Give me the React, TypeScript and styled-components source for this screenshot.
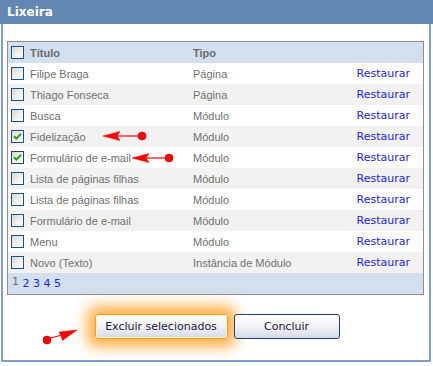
import React from "react";
import styled, { createGlobalStyle } from "styled-components";

const GlobalStyle = createGlobalStyle`
  html, body {
    margin: 0;
    padding: 0;
    background: #ffffff;
  }
`;

type Item = {
  title: string;
  tipo: string;
  checked?: boolean;
  focus?: boolean;
};

const items: Item[] = [
  { title: "Filipe Braga", tipo: "Página" },
  { title: "Thiago Fonseca", tipo: "Página" },
  { title: "Busca", tipo: "Módulo" },
  { title: "Fidelização", tipo: "Módulo", checked: true },
  { title: "Formulário de e-mail", tipo: "Módulo", checked: true, focus: true },
  { title: "Lista de páginas filhas", tipo: "Módulo" },
  { title: "Lista de páginas filhas", tipo: "Módulo" },
  { title: "Formulário de e-mail", tipo: "Módulo" },
  { title: "Menu", tipo: "Módulo" },
  { title: "Novo (Texto)", tipo: "Instância de Módulo" },
];

const CheckMark = () => (
  <svg width="9" height="9" viewBox="0 0 9 9">
    <path d="M1 4.2 L3.4 6.6 L8 1.8" fill="none" stroke="#21a121" strokeWidth="2" />
  </svg>
);

const Box = ({ checked, focus }: { checked?: boolean; focus?: boolean }) => (
  <CheckOuter $focus={focus}>
    <CheckBox>{checked && <CheckMark />}</CheckBox>
  </CheckOuter>
);

const App = (): JSX.Element => {
  return (
    <>
      <GlobalStyle />
      <Panel>
        <Header>Lixeira</Header>
        <Body>
          <Table>
            <HeadRow>
              <Cell>
                <Box />
              </Cell>
              <HeadText>Título</HeadText>
              <HeadText>Tipo</HeadText>
              <span />
            </HeadRow>
            {items.map((it, i) => (
              <Row key={i} $alt={i % 2 === 1}>
                <Cell>
                  <Box checked={it.checked} focus={it.focus} />
                </Cell>
                <Text>{it.title}</Text>
                <Text>{it.tipo}</Text>
                <Restore href="#">Restaurar</Restore>
              </Row>
            ))}
            <Pager>
              <Current>1</Current>
              <PageLink href="#">2</PageLink>
              <PageLink href="#">3</PageLink>
              <PageLink href="#">4</PageLink>
              <PageLink href="#">5</PageLink>
            </Pager>
          </Table>
          <Buttons>
            <Button $glow>Excluir selecionados</Button>
            <Button $w={106}>Concluir</Button>
          </Buttons>
        </Body>
        <Notes width="433" height="366" viewBox="0 0 433 366">
          <g fill="#ff0000" stroke="#ff0000">
            <line x1="116" y1="136" x2="141" y2="136" strokeWidth="1.2" />
            <polygon points="103,136 120,131.5 117,136 120,140.5" strokeWidth="0.5" />
            <circle cx="142" cy="136" r="4" stroke="#c00000" strokeWidth="0.6" />

            <line x1="145" y1="158" x2="168" y2="158" strokeWidth="1.2" />
            <polygon points="132,158 149,153.5 146,158 149,162.5" strokeWidth="0.5" />
            <circle cx="169" cy="158" r="4" stroke="#c00000" strokeWidth="0.6" />

            <line x1="47" y1="339" x2="62" y2="335" strokeWidth="1.2" />
            <polygon points="77,330 62.5,340.5 61,336 59,332" strokeWidth="0.5" />
            <circle cx="47" cy="340" r="4" stroke="#c00000" strokeWidth="0.6" />
          </g>
        </Notes>
      </Panel>
    </>
  );
};

export default App;

const Panel = styled.div`
  position: relative;
  width: 433px;
  height: 366px;
  background: #ffffff;
  font-family: "Liberation Sans", Arial, sans-serif;
`;

const Header = styled.div`
  height: 24px;
  line-height: 25px;
  padding-left: 7px;
  background: #6386b3;
  color: #ffffff;
  font-family: "DejaVu Sans", Verdana, sans-serif;
  font-weight: bold;
  font-size: 12px;
`;

const Body = styled.div`
  margin: 0 2px 0 1px;
  height: 319px;
  padding: 17px 5px 0 4px;
  border: 2px solid #7f9dc6;
  border-top: none;
  display: flex;
  flex-direction: column;
  gap: 19px;
`;

const Table = styled.div`
  border: 1px solid #8e8e8e;
  display: flex;
  flex-direction: column;
`;

const RowBase = styled.div`
  display: grid;
  grid-template-columns: 22px 163px 161px 1fr;
  align-items: center;
  height: 21px;
`;

const HeadRow = styled(RowBase)`
  background: #d2dfef;
`;

const Row = styled(RowBase)<{ $alt?: boolean }>`
  background: ${(p) => (p.$alt ? "#f2f2f2" : "#ffffff")};
`;

const Cell = styled.div`
  display: flex;
  align-items: center;
  padding-left: 3px;
`;

const CheckOuter = styled.div<{ $focus?: boolean }>`
  width: 13px;
  height: 13px;
  outline: ${(p) => (p.$focus ? "1px dotted #333" : "none")};
  outline-offset: -1px;
  display: flex;
`;

const CheckBox = styled.div`
  width: 11px;
  height: 11px;
  border: 1px solid #1c5180;
  background: linear-gradient(135deg, #d8d8d2 0%, #f2f2ef 60%, #ffffff 100%);
  display: flex;
  align-items: center;
  justify-content: center;
`;

const HeadText = styled.span`
  font-size: 11px;
  font-weight: bold;
  color: #6b6b6b;
`;

const Text = styled.span`
  font-size: 11px;
  color: #707070;
  white-space: nowrap;
`;

const Restore = styled.a`
  justify-self: end;
  margin-right: 13px;
  font-family: "DejaVu Sans", Verdana, sans-serif;
  font-size: 11px;
  color: #2323e6;
  text-decoration: none;
`;

const Pager = styled.div`
  height: 21px;
  background: #d2dfef;
  display: flex;
  align-items: center;
  gap: 3.5px;
  padding-left: 4px;
  font-family: "DejaVu Sans", Verdana, sans-serif;
  font-size: 11px;
`;

const Current = styled.span`
  color: #707070;
  position: relative;
  top: -2px;
`;

const PageLink = styled.a`
  color: #2323e6;
  text-decoration: none;
`;

const Buttons = styled.div`
  display: flex;
  justify-content: center;
  gap: 6px;
  padding-left: 3px;
`;

const Button = styled.button<{ $glow?: boolean; $w?: number }>`
  width: ${(p) => (p.$w ? `${p.$w}px` : "133px")};
  height: 25px;
  padding: 0;
  font-family: "DejaVu Sans", Verdana, sans-serif;
  font-size: 11px;
  color: #24163a;
  border-radius: 3px;
  border: 1px solid ${(p) => (p.$glow ? "#e9a21c" : "#26406e")};
  background: linear-gradient(180deg, #ffffff 0%, #f3f3f7 50%, #d6d9e6 100%);
  box-shadow: ${(p) =>
    p.$glow
      ? "inset 0 0 0 1px #fff3d0, 0 0 14px 8px rgba(255, 155, 25, 0.8)"
      : "none"};
`;

const Notes = styled.svg`
  position: absolute;
  left: 0;
  top: 0;
  pointer-events: none;
`;
